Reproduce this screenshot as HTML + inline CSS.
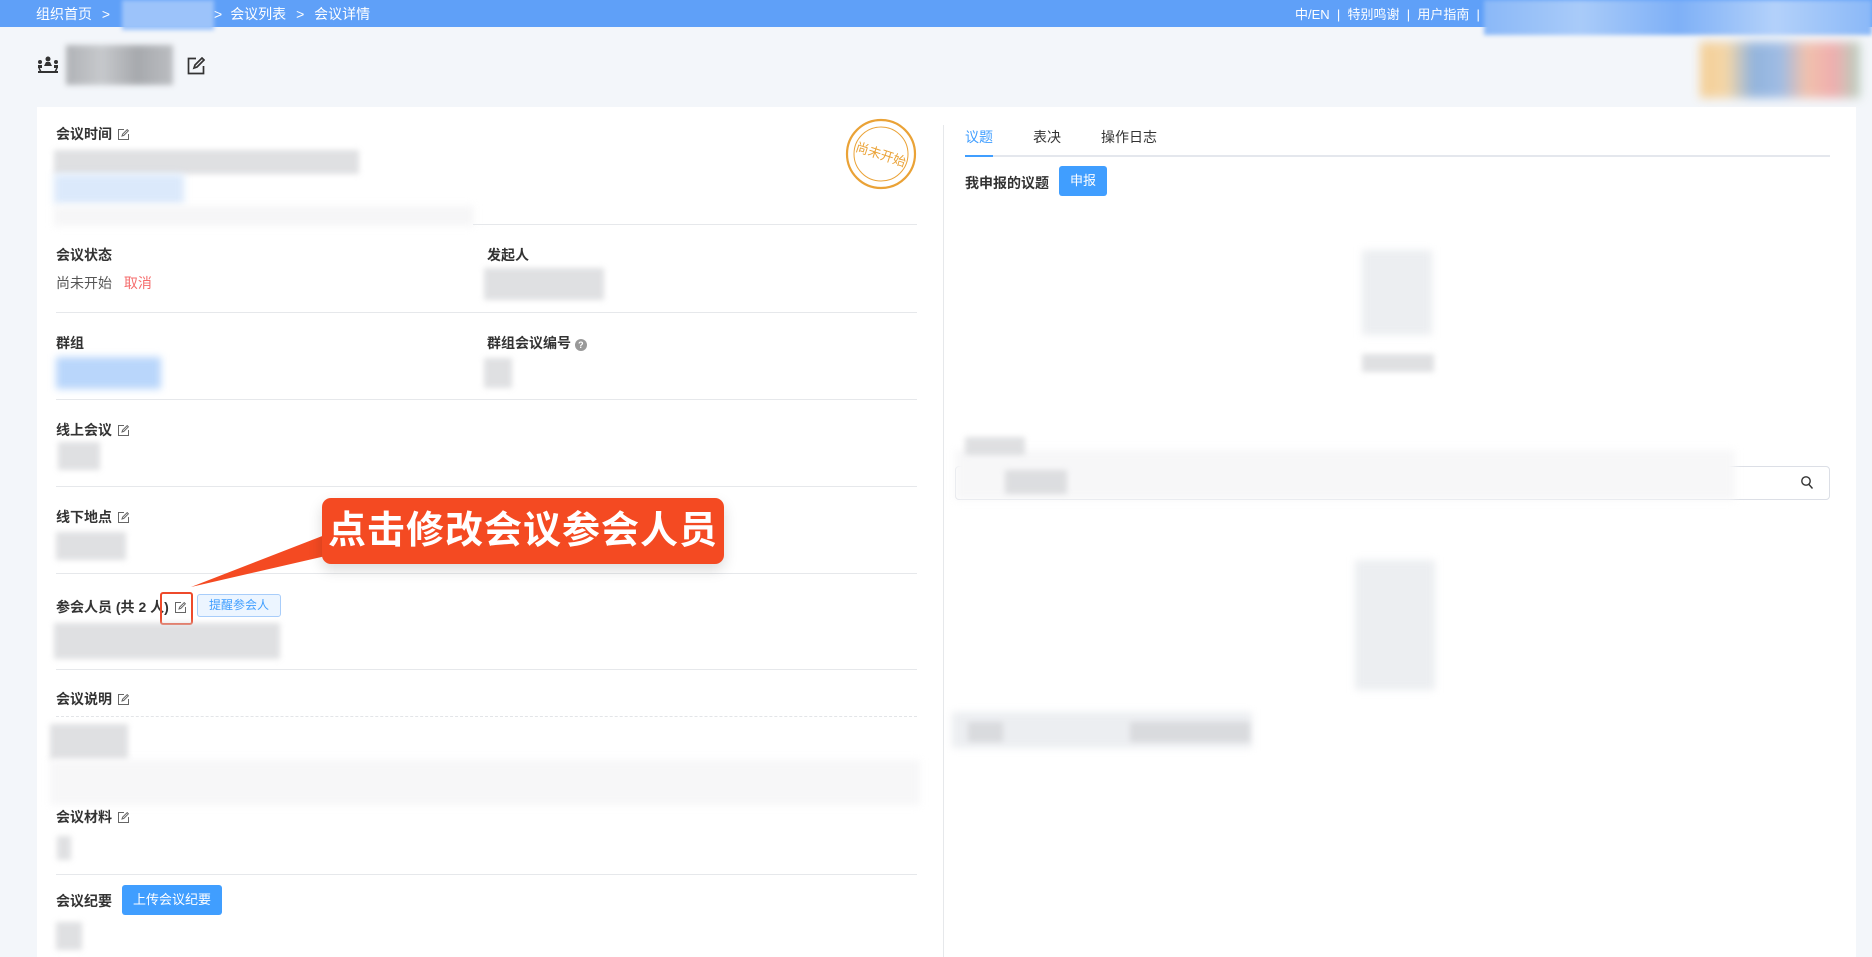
<!DOCTYPE html>
<html><head><meta charset="utf-8"><style>
*{margin:0;padding:0;box-sizing:border-box}
body{width:1872px;height:957px;overflow:hidden;background:#f3f6fa;font-family:"Liberation Sans","Noto Sans CJK SC",sans-serif;color:#333;position:relative}
.a{position:absolute}
.top{left:0;top:0;width:1872px;height:27px;background:#5fa0f8;color:#fff;font-size:14px}
.card{left:37px;top:107px;width:1819px;height:850px;background:#fff}
.lbl{position:absolute;font-size:14px;font-weight:bold;color:#333;white-space:nowrap}
.val{position:absolute;font-size:14px;color:#555;white-space:nowrap}
.hr{position:absolute;height:1px;background:#e6e8eb;left:56px;width:861px}
.b{position:absolute;background:#d2d3d6;filter:blur(3px);opacity:.7}
.bl{position:absolute;background:#eceef1;filter:blur(4px)}
.ed{display:inline-block;width:11px;height:11px;vertical-align:-1px;margin-left:6px}
</style></head><body>
<div class="a top">
 <span class="a" style="left:36px;top:4px">组织首页 <span style="margin:0 6px">&gt;</span></span>
 <div class="a" style="left:122px;top:0;width:92px;height:30px;background:#9cc3fa;filter:blur(2px)"></div>
 <span class="a" style="left:214px;top:4px"><span style="margin-right:8px">&gt;</span>会议列表 <span style="margin:0 6px">&gt;</span> 会议详情</span>
 <span class="a" style="left:1295px;top:4px;font-size:13px">中/EN &nbsp;| &nbsp;特别鸣谢 &nbsp;| &nbsp;用户指南 &nbsp;|</span>
 <div class="a" style="left:1484px;top:0;width:388px;height:35px;background:linear-gradient(90deg,#8ab8f8,#a9cbf9,#7eb0f7,#b3d1fa,#8ab8f8);filter:blur(2px)"></div>
</div>
<!-- title -->
<svg class="a" style="left:37px;top:56px" width="22" height="18" viewBox="0 0 22 18"><circle cx="11" cy="3" r="2.5" fill="#333"/><circle cx="3" cy="6" r="2" fill="#333"/><circle cx="19" cy="6" r="2" fill="#333"/><path d="M7 10h8l-2-4H9z M1 9h4v3H1z M17 9h4v3h-4z" fill="#333"/><path d="M1 16h20" stroke="#333" stroke-width="2"/><path d="M2 12l2 4M20 12l-2 4" stroke="#333" stroke-width="1.5"/></svg>
<div class="a" style="left:66px;top:45px;width:107px;height:40px;background:linear-gradient(90deg,#9a9ca0,#b8babd,#8e9094,#a9abaf);filter:blur(3px);opacity:.75"></div>
<svg class="a" style="left:187px;top:57px" width="18" height="18" viewBox="0 0 18 18" fill="none" stroke="#333" stroke-width="1.7"><path d="M9 1.5H1.5v15h15V9"/><path d="M7 11l1-3 7-7 2 2-7 7z"/></svg>
<div class="a" style="left:1700px;top:42px;width:160px;height:56px;background:linear-gradient(90deg,#f6c57c,#f4cf95,#7ba4d6,#8aaee0,#f1b59a,#ef9c9c,#a8c6b0);filter:blur(5px);opacity:.8"></div>

<div class="a card"></div>
<div class="a" style="left:943px;top:125px;width:1px;height:832px;background:#e6e8eb"></div>

<!-- left panel -->
<div class="lbl" style="left:56px;top:124px">会议时间<svg class="ed" viewBox="0 0 11 11" fill="none" stroke="#666" stroke-width="1"><path d="M6 .5H.5v10h10V5"/><path d="M4 7l.6-1.8 4.6-4.6 1.2 1.2L5.8 6.4z"/></svg></div>
<div class="b" style="left:54px;top:150px;width:305px;height:24px"></div>
<div class="bl" style="left:54px;top:174px;width:130px;height:30px;background:#dbe9fb"></div>
<div class="bl" style="left:54px;top:206px;width:420px;height:20px;background:#f6f6f7"></div>
<svg class="a" style="left:844px;top:117px" width="74" height="74" viewBox="0 0 74 74"><circle cx="37" cy="37" r="34" fill="none" stroke="#eaa236" stroke-width="2.2"/><circle cx="37" cy="37" r="27" fill="none" stroke="#eaa236" stroke-width="1"/><text x="37" y="42" text-anchor="middle" font-size="13" fill="#eaa236" transform="rotate(18 37 37)" font-family="Liberation Sans,Noto Sans CJK SC,sans-serif">尚未开始</text></svg>
<div class="hr" style="top:224px;left:473px;width:444px"></div>

<div class="lbl" style="left:56px;top:245px">会议状态</div>
<div class="val" style="left:56px;top:273px">尚未开始 <span style="color:#f56c6c;margin-left:8px">取消</span></div>
<div class="lbl" style="left:487px;top:245px">发起人</div>
<div class="b" style="left:484px;top:268px;width:120px;height:32px"></div>
<div class="hr" style="top:312px"></div>

<div class="lbl" style="left:56px;top:333px">群组</div>
<div class="bl" style="left:56px;top:357px;width:105px;height:32px;background:#b9d6fb"></div>
<div class="lbl" style="left:487px;top:333px">群组会议编号 <span style="display:inline-block;width:12px;height:12px;border-radius:6px;background:#999;color:#fff;font-size:9px;text-align:center;line-height:12px;vertical-align:0">?</span></div>
<div class="b" style="left:484px;top:358px;width:28px;height:30px"></div>
<div class="hr" style="top:399px"></div>

<div class="lbl" style="left:56px;top:420px">线上会议<svg class="ed" viewBox="0 0 11 11" fill="none" stroke="#666" stroke-width="1"><path d="M6 .5H.5v10h10V5"/><path d="M4 7l.6-1.8 4.6-4.6 1.2 1.2L5.8 6.4z"/></svg></div>
<div class="b" style="left:58px;top:442px;width:42px;height:28px"></div>
<div class="hr" style="top:486px"></div>

<div class="lbl" style="left:56px;top:507px">线下地点<svg class="ed" viewBox="0 0 11 11" fill="none" stroke="#666" stroke-width="1"><path d="M6 .5H.5v10h10V5"/><path d="M4 7l.6-1.8 4.6-4.6 1.2 1.2L5.8 6.4z"/></svg></div>
<div class="b" style="left:56px;top:532px;width:70px;height:28px"></div>
<div class="hr" style="top:573px"></div>

<div class="lbl" style="left:56px;top:597px">参会人员 (共 2 人)<svg class="ed" viewBox="0 0 11 11" fill="none" stroke="#666" stroke-width="1"><path d="M6 .5H.5v10h10V5"/><path d="M4 7l.6-1.8 4.6-4.6 1.2 1.2L5.8 6.4z"/></svg></div>
<div class="a" style="left:160px;top:592px;width:33px;height:33px;border:2px solid #ee4a2b;border-radius:3px"></div>
<div class="a" style="left:197px;top:594px;width:84px;height:23px;border:1px solid #a8cdfa;background:#ecf5ff;color:#409eff;font-size:12px;text-align:center;line-height:21px;border-radius:3px">提醒参会人</div>
<div class="b" style="left:54px;top:623px;width:226px;height:36px"></div>
<div class="hr" style="top:669px"></div>

<div class="lbl" style="left:56px;top:689px">会议说明<svg class="ed" viewBox="0 0 11 11" fill="none" stroke="#666" stroke-width="1"><path d="M6 .5H.5v10h10V5"/><path d="M4 7l.6-1.8 4.6-4.6 1.2 1.2L5.8 6.4z"/></svg></div>
<div class="a" style="left:56px;top:716px;width:861px;border-top:1px dashed #e3e5e8"></div>
<div class="b" style="left:50px;top:724px;width:78px;height:36px"></div>
<div class="bl" style="left:50px;top:760px;width:870px;height:45px;background:#f7f7f8"></div>

<div class="lbl" style="left:56px;top:807px">会议材料<svg class="ed" viewBox="0 0 11 11" fill="none" stroke="#666" stroke-width="1"><path d="M6 .5H.5v10h10V5"/><path d="M4 7l.6-1.8 4.6-4.6 1.2 1.2L5.8 6.4z"/></svg></div>
<div class="b" style="left:57px;top:836px;width:14px;height:24px"></div>
<div class="hr" style="top:874px"></div>

<div class="lbl" style="left:56px;top:891px">会议纪要</div>
<div class="a" style="left:122px;top:885px;width:100px;height:30px;background:#409eff;border-radius:3px;color:#fff;font-size:13px;text-align:center;line-height:30px">上传会议纪要</div>
<div class="b" style="left:56px;top:922px;width:26px;height:28px"></div>

<!-- callout -->
<svg class="a" style="left:185px;top:495px" width="160" height="100" viewBox="0 0 160 100"><path d="M145 38 L6 92 L145 60z" fill="#f44a22"/></svg>
<div class="a" style="left:322px;top:498px;width:402px;height:66px;background:#f44a22;border-radius:9px;box-shadow:0 6px 14px rgba(0,0,0,.15);color:#fff;font-weight:bold;font-size:38px;line-height:66px;text-align:center;letter-spacing:1px">点击修改会议参会人员</div>

<!-- right panel -->
<div class="a" style="left:965px;top:127px;font-size:14px;color:#409eff">议题</div>
<div class="a" style="left:1033px;top:127px;font-size:14px;color:#333">表决</div>
<div class="a" style="left:1101px;top:127px;font-size:14px;color:#333">操作日志</div>
<div class="a" style="left:965px;top:155px;width:865px;height:2px;background:#e4e7ed"></div>
<div class="a" style="left:965px;top:155px;width:28px;height:2px;background:#409eff"></div>
<div class="lbl" style="left:965px;top:173px">我申报的议题</div>
<div class="a" style="left:1059px;top:166px;width:48px;height:30px;background:#409eff;border-radius:3px;color:#fff;font-size:13px;text-align:center;line-height:30px">申报</div>
<div class="bl" style="left:1362px;top:250px;width:70px;height:85px"></div>
<div class="b" style="left:1362px;top:354px;width:72px;height:18px"></div>
<div class="a" style="left:955px;top:466px;width:875px;height:34px;border:1px solid #dcdfe6;border-radius:4px"></div>
<svg class="a" style="left:1800px;top:475px" width="14" height="15" viewBox="0 0 14 15" fill="none" stroke="#333" stroke-width="1.4"><circle cx="6" cy="6" r="4.2"/><path d="M9 9.5l3.5 4"/></svg>
<div class="bl" style="left:955px;top:450px;width:780px;height:50px;background:#f7f7f8"></div>
<div class="b" style="left:965px;top:437px;width:60px;height:18px"></div>
<div class="b" style="left:1005px;top:470px;width:62px;height:24px"></div>
<div class="bl" style="left:1355px;top:560px;width:80px;height:130px"></div>
<div class="bl" style="left:952px;top:712px;width:300px;height:36px"></div>
<div class="b" style="left:968px;top:722px;width:35px;height:20px"></div>
<div class="b" style="left:1130px;top:722px;width:120px;height:20px"></div>
</body></html>
